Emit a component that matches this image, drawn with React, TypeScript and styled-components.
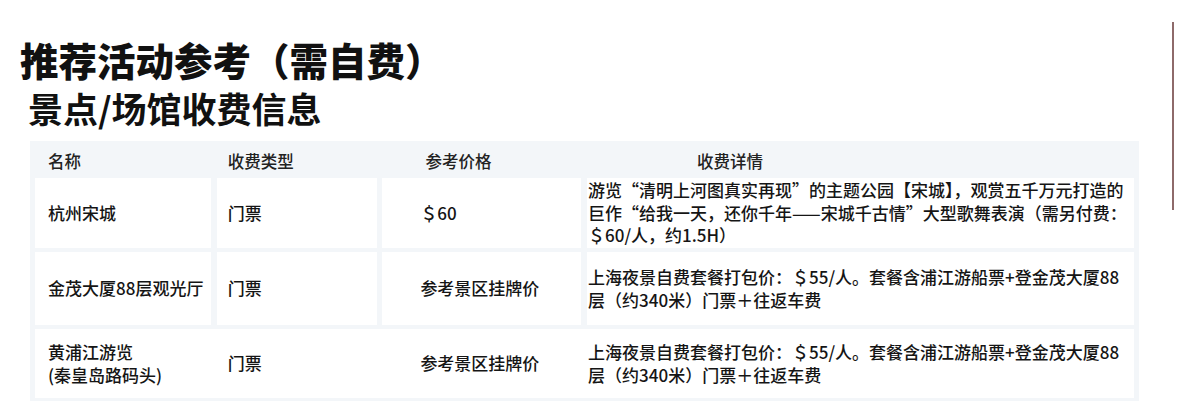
import React from 'react'
import styled, { createGlobalStyle } from 'styled-components'

const GlobalStyle = createGlobalStyle`
	body {
		margin: 0;
		background: #ffffff;
		font-family: 'Noto Sans CJK SC', 'Noto Sans', sans-serif;
		color: #1c1c1c;
	}
`

const Page = styled.div`
	position: relative;
	width: 1180px;
	height: 412px;
	padding: 36px 0 0 20px;
	box-sizing: border-box;
	overflow: hidden;
`

const Title = styled.h1`
	margin: 0;
	font-size: 38.5px;
	line-height: 46px;
	font-weight: 900;
	color: #111;
`

const SubTitle = styled.h2`
	margin: 5px 0 0 8px;
	font-size: 35px;
	line-height: 42px;
	font-weight: 700;
	color: #111;
`

const Divider = styled.div`
	position: absolute;
	left: 1172px;
	top: 22px;
	width: 2px;
	height: 188px;
	background: #8e6a6a;
`

const Table = styled.div`
	margin: 12px 0 0 10px;
	width: 1109px;
	box-sizing: border-box;
	padding: 0 5px 3px;
	background: #f3f6f9;
	display: flex;
	flex-direction: column;
	gap: 4px;
`

const cols = '176px 160px 199px 547px'

const HeadRow = styled.div`
	display: grid;
	grid-template-columns: ${cols};
	column-gap: 5.7px;
	height: 33px;
	box-sizing: border-box;
	padding-bottom: 3px;
	align-items: end;
	font-size: 16.5px;
	font-weight: 500;
	color: #222;
`

const HeadCell = styled.div<{ $pad: number }>`
	padding-left: ${p => p.$pad}px;
	line-height: 20px;
`

const Row = styled.div<{ $h: number; $merged?: boolean }>`
	display: grid;
	grid-template-columns: ${cols};
	column-gap: 5.7px;
	height: ${p => p.$h}px;
	background: ${p => (p.$merged ? '#ffffff' : 'transparent')};
`

const Cell = styled.div<{ $pad: number }>`
	background: #ffffff;
	display: flex;
	align-items: center;
	padding-left: ${p => p.$pad}px;
	font-size: 17px;
	font-weight: 500;
	line-height: 22.5px;
	color: #151515;
	white-space: pre-line;
`

const pads = [13, 11, 38, 1]

const rows = [
	{
		h: 70,
		cells: [
			'杭州宋城',
			'门票',
			'＄60',
			'游览“清明上河图真实再现”的主题公园【宋城】，观赏五千万元打造的巨作“给我一天，还你千年——宋城千古情”大型歌舞表演（需另付费：＄60/人，约1.5H）',
		],
	},
	{
		h: 73,
		cells: [
			'金茂大厦88层观光厅',
			'门票',
			'参考景区挂牌价',
			'上海夜景自费套餐打包价：＄55/人。套餐含浦江游船票+登金茂大厦88层（约340米）门票＋往返车费',
		],
	},
	{
		h: 69,
		merged: true,
		cells: [
			'黄浦江游览\n(秦皇岛路码头)',
			'门票',
			'参考景区挂牌价',
			'上海夜景自费套餐打包价：＄55/人。套餐含浦江游船票+登金茂大厦88层（约340米）门票＋往返车费',
		],
	},
]

export default function App() {
	return (
		<>
			<GlobalStyle />
			<Page>
				<Title>推荐活动参考（需自费）</Title>
				<SubTitle>景点/场馆收费信息</SubTitle>
				<Table>
					<HeadRow>
						<HeadCell $pad={13}>名称</HeadCell>
						<HeadCell $pad={11}>收费类型</HeadCell>
						<HeadCell $pad={43}>参考价格</HeadCell>
						<HeadCell $pad={110}>收费详情</HeadCell>
					</HeadRow>
					{rows.map((r, i) => (
						<Row key={i} $h={r.h} $merged={r.merged}>
							{r.cells.map((c, j) => (
								<Cell key={j} $pad={pads[j]}>
									{c}
								</Cell>
							))}
						</Row>
					))}
				</Table>
				<Divider />
			</Page>
		</>
	)
}
